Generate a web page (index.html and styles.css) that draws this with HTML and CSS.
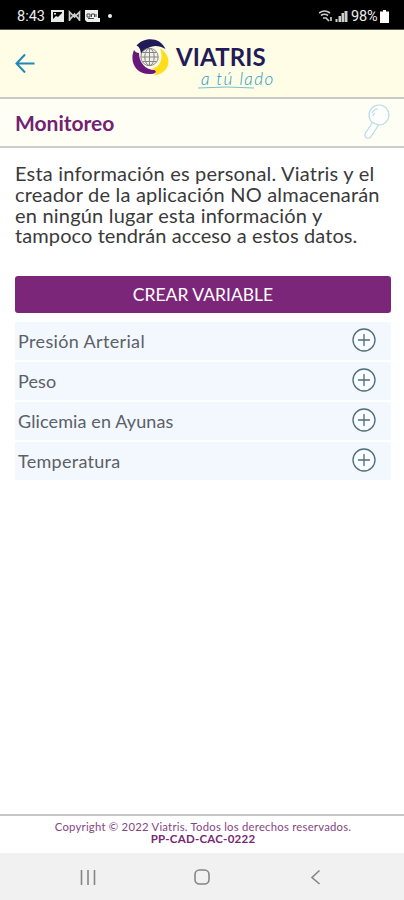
FILE: index.html
```html
<!DOCTYPE html>
<html lang="es">
<head>
<meta charset="utf-8">
<title>Monitoreo</title>
<link rel="stylesheet" href="styles.css">
</head>
<body>
<div class="status">
  <span class="time">8:43</span>
  <svg class="status-left" width="64" height="14" viewBox="0 0 64 14">
    <path fill="#e8e8e8" fill-rule="evenodd" d="M0 1h13v12H0zM2 3v7l3-3 2 1 4-4V3zM3 4h2v1.500H3z"/>
    <path fill="none" stroke="#ccc" stroke-width="1.700" d="M18.500 12V3l5 5 5-5v9M18.500 11l5-6 5 6"/>
    <path fill="#eee" d="M34 1h13v8h2v4H36l-2-2z"/>
    <path fill="none" stroke="#444" stroke-width="1" d="M36 5h3v3h-3zM40.500 8V5h3v3M45 8V5M37 9.500h6"/>
    <circle cx="59" cy="7" r="2" fill="#eee"/>
  </svg>
  <svg class="status-right" width="29" height="14" viewBox="0 0 29 14">
    <g fill="none" stroke="#ccc" stroke-width="1.700"><path d="M0 4q5.500-4 11 0M2 6.500q3.500-2.500 7 0"/><path d="M4 9h3L10 12M12 8v4"/></g>
    <path fill="#ccc" d="M16.500 10h2v3h-2zM19.500 7h2.500v6h-2.500zM22.500 4H25v9h-2.500zM25.500 2h3v11h-3z"/>
  </svg>
  <span class="percent">98%</span>
  <svg class="battery" width="9" height="13" viewBox="0 0 9 13"><path fill="#fff" d="M3 0h3v1.500h3V13H0V1.500h3z"/></svg>
</div>
<header class="header">
  <svg class="back" width="20" height="20" viewBox="0 0 20 20"><path fill="none" stroke="#2088ba" stroke-width="2" d="M19.500 10.500H2M10 1.500l-8.500 9 8.500 9"/></svg>
  <svg class="emblem" width="38" height="38" viewBox="0 0 38 38">
    <path fill="#211b57" d="M5.500 7.500C12-1 29-2 34.500 11C25 5 15 8 10 17.500C10 13 9 9 5.500 7.500z"/>
    <path fill="#6a177c" d="M3 12C-2 24 5 37 20 36C23 36 25 35 26 32C15 33 8 25 8 15C6 15 4 14 3 12z"/>
    <path fill="#ffdc1c" d="M29 10.500C42 18 40 35 23 37.500C26 35 26 32 20 30.500C29 30 33 20 29 10.500z"/>
    <circle cx="18.500" cy="19" r="8.700" fill="#f2f0e4" stroke="#85868b" stroke-width="1"/>
    <g fill="none" stroke="#85868b" stroke-width="1"><path d="M10 19h17M18.500 10.500v17M11.500 14.500h14M11.500 23.500h14"/><ellipse cx="18.500" cy="19" rx="4.700" ry="8.500"/></g>
  </svg>
  <div class="brand"><span class="name">VIATRIS</span><span class="tagline">a tú lado</span>
    <svg class="flourish" width="64" height="5" viewBox="0 0 64 5"><path fill="none" stroke="#55b0ca" stroke-width=".8" d="M0 3Q30 1 56 3"/></svg>
  </div>
</header>
<div class="titlebar">
  <h1>Monitoreo</h1>
  <svg class="search" width="26" height="36" viewBox="0 0 26 36"><g fill="#fdfefd" stroke="#b8dce6" stroke-width="1.200"><circle cx="15" cy="11" r="10"/><path d="M8.500 18.500L1.500 29q-1.500 4 1.500 5q3 1 4.500-2L14.500 21z"/><path fill="none" d="M8 9q2-4 6-4M9 12q0-2 2-3"/></g></svg>
</div>
<main>
  <p class="intro">Esta información es personal. Viatris y el<br>creador de la aplicación NO almacenarán<br>en ningún lugar esta información y<br><span class="last">tampoco tendrán acceso a estos datos.</span></p>
  <button class="create">CREAR VARIABLE</button>
  <ul class="list">
    <li><span class="t1">Presión Arterial</span><svg class="plus" width="24" height="24" viewBox="0 0 24 24"><circle cx="12" cy="12" r="11"/><path d="M6 12h12M12 6v12"/></svg></li>
    <li><span class="t2">Peso</span><svg class="plus" width="24" height="24" viewBox="0 0 24 24"><circle cx="12" cy="12" r="11"/><path d="M6 12h12M12 6v12"/></svg></li>
    <li><span class="t3">Glicemia en Ayunas</span><svg class="plus" width="24" height="24" viewBox="0 0 24 24"><circle cx="12" cy="12" r="11"/><path d="M6 12h12M12 6v12"/></svg></li>
    <li><span class="t4">Temperatura</span><svg class="plus" width="24" height="24" viewBox="0 0 24 24"><circle cx="12" cy="12" r="11"/><path d="M6 12h12M12 6v12"/></svg></li>
  </ul>
</main>
<footer><span class="copy">Copyright © 2022 Viatris. Todos los derechos reservados.</span><span class="code">PP-CAD-CAC-0222</span></footer>
<nav>
  <svg width="16" height="16" viewBox="0 0 16 16"><path d="M1.500 1v15M8 1v15M14.500 1v15"/></svg>
  <svg width="16" height="16" viewBox="0 0 16 16"><rect x="1" y="1" width="14" height="14" rx="4.500"/></svg>
  <svg width="16" height="16" viewBox="0 0 16 16"><path d="M11.500 1.500L4 8.500l7.500 6.500"/></svg>
</nav>
</body>
</html>
```
FILE: styles.css
```css
* { box-sizing: border-box; }
body { margin: 0; width: 404px; height: 900px; display: flex; flex-direction: column; background: #fff; font-family: Lato, sans-serif; overflow: hidden; }
svg { display: block; flex: none; }
.status { height: 30px; flex: none; background: #000; color: #ededed; display: flex; align-items: center; padding: 3px 15px 0 17px; font: 14.500px Roboto, sans-serif; border-bottom: 1px solid #555; }
.time { width: 34px; white-space: nowrap; }
.status-right { margin-left: auto; margin-right: 3px; }
.percent { width: 29px; white-space: nowrap; letter-spacing: -.2px; }
.header { height: 69px; flex: none; background: #fffde5; border-bottom: 2px solid #cbcac6; display: flex; align-items: flex-start; }
.back { margin: 23px 0 0 15px; }
.emblem { margin: 8px 0 0 96px; }
.brand { margin: 14px 0 0 7px; width: 110px; display: flex; flex-direction: column; }
.name { font-size: 24px; font-weight: 700; line-height: 26px; color: #211b57; letter-spacing: .15px; }
.tagline { font-size: 17px; font-style: italic; font-weight: 300; line-height: 16px; color: #249bc0; margin: 1px 0 0 25px; letter-spacing: 1.400px; }
.flourish { margin: -2px 0 0 22px; }
.titlebar { height: 49px; flex: none; background: #fffef4; border-bottom: 2px solid #ccc; display: flex; justify-content: space-between; align-items: center; padding: 0 14px 0 15px; }
h1 { margin: 0; font-size: 21px; line-height: 26px; font-weight: 700; color: #722272; }
.search { margin-top: -2px; }
main { flex: 1; padding: 15px 13px 0 15px; }
.intro { margin: 0; font-size: 20px; line-height: 20.800px; color: #3a3a3a; white-space: nowrap; letter-spacing: .2px; }
.last { letter-spacing: .09px; }
.create { display: block; width: 376px; height: 37px; margin: 30px 0 9px; border: 0; border-radius: 3px; background: #7b2679; color: #fff; font: 17.500px/37px Lato, sans-serif; padding: 0; }
.list { margin: 0; padding: 0; list-style: none; display: grid; gap: 2px; }
.list li { height: 38px; background: #f2f8fe; display: flex; justify-content: space-between; padding: 0 15px 0 3px; font-size: 18px; line-height: 38px; color: #5c6066; }
.t1 { letter-spacing: .35px; }
.t2 { letter-spacing: .1px; }
.t3 { letter-spacing: .12px; }
.t4 { letter-spacing: .28px; }
.plus { margin-top: 6px; fill: #f9fcfe; stroke: #506b79; stroke-width: 1.300; }
footer { height: 39px; flex: none; border-top: 2px solid #c5c5c5; display: flex; flex-direction: column; align-items: center; padding: 4px 0 0 2px; color: #834583; white-space: nowrap; }
.copy { font-size: 11.300px; line-height: 13px; letter-spacing: .24px; }
.code { font-size: 11.500px; line-height: 11px; font-weight: 700; letter-spacing: .25px; color: #752975; }
nav { height: 47px; flex: none; background: #f1f1f1; display: flex; justify-content: space-between; align-items: center; padding: 2px 80px; fill: none; stroke: #858585; stroke-width: 1.600; }
```
